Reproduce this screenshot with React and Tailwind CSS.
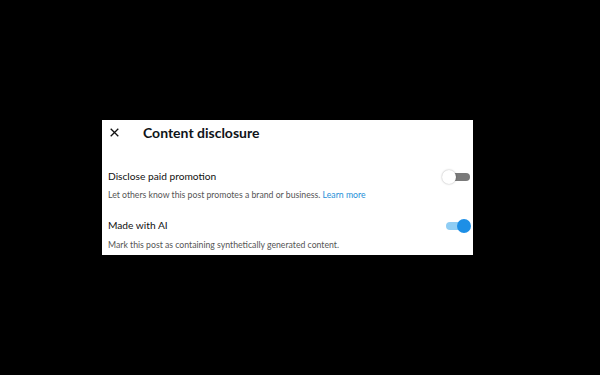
import { useState } from "react";

function Toggle({ on }) {
  return (
    <div className="relative w-[28px] h-[14px] flex items-center">
      <div
        className={`ml-auto h-[8px] rounded-full ${
          on ? "w-[24px] bg-[#8fcdf4]" : "w-[22px] bg-[#7a7a7a]"
        }`}
      />
      <div
        className={`absolute top-0 w-[14px] h-[14px] rounded-full ${
          on
            ? "right-[-1px] bg-[#1d8fe6]"
            : "left-0 bg-white shadow-[0_0_2px_rgba(0,0,0,0.35)]"
        }`}
      />
    </div>
  );
}

function Setting({ title, desc, link, on }) {
  return (
    <div className="flex flex-col">
      <div className="flex items-center justify-between">
        <span className="text-[10.2px] text-[#111]">{title}</span>
        <Toggle on={on} />
      </div>
      <p className="mt-[4px] text-[8.7px] text-[#555]">
        {desc}
        {link && <span className="text-[#1d8fd8]"> {link}</span>}
      </p>
    </div>
  );
}

export default function App() {
  const [settings] = useState([
    {
      title: "Disclose paid promotion",
      desc: "Let others know this post promotes a brand or business.",
      link: "Learn more",
      on: false,
    },
    {
      title: "Made with AI",
      desc: "Mark this post as containing synthetically generated content.",
      on: true,
    },
  ]);

  return (
    <div
      className="w-[600px] h-[375px] bg-black flex items-center pl-[102px]"
      style={{ fontFamily: 'Lato, "Liberation Sans", sans-serif' }}
    >
      <div className="w-[371px] h-[135px] bg-white pl-[6px] pr-[3px] pt-[4px]">
        <div className="flex items-center h-[17px]">
          <svg width="9" height="9" viewBox="0 0 9 9" className="ml-[2px]">
            <path d="M0.7 0.7L8.3 8.3M8.3 0.7L0.7 8.3" stroke="#111" strokeWidth="1.3" />
          </svg>
          <h2 className="ml-[24px] text-[14px] font-bold text-[#0f1419]">
            Content disclosure
          </h2>
        </div>
        <div className="mt-[28px] flex flex-col gap-[17px]">
          {settings.map((s) => (
            <Setting key={s.title} {...s} />
          ))}
        </div>
      </div>
    </div>
  );
}
